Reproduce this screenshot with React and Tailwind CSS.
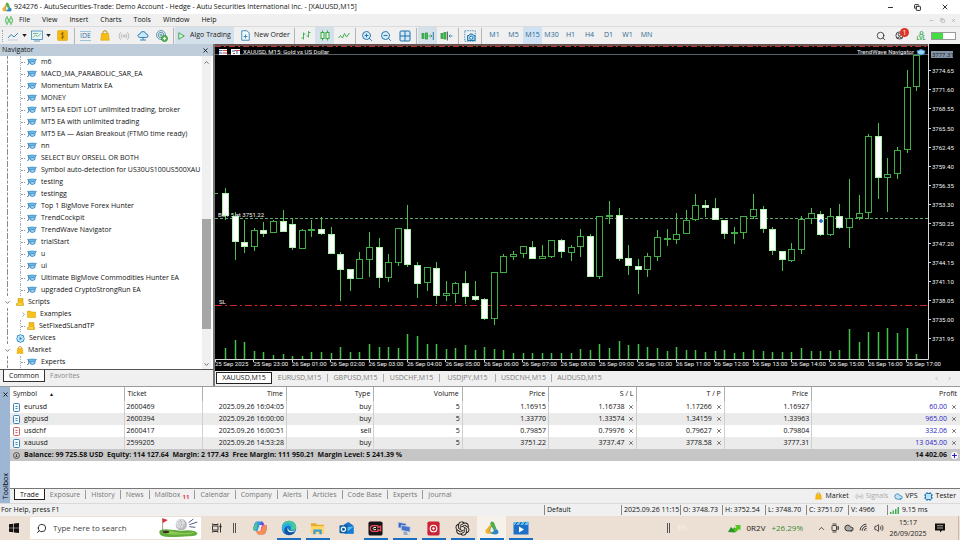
import { useState } from 'react';
import { ChevronDown, ChevronRight, ChevronUp, Cloud, Copy, Minus, Plus, Radio, Search, Volume2, Wifi, X, ZoomIn, ZoomOut } from 'lucide-react';
import { RiOpenaiFill } from 'react-icons/ri';

const menus = ['File', 'View', 'Insert', 'Charts', 'Tools', 'Window', 'Help'];
const timeframes = ['M1', 'M5', 'M15', 'M30', 'H1', 'H4', 'D1', 'W1', 'MN'];
const experts = [
  'm6', 'MACD_MA_PARABOLIC_SAR_EA', 'Momentum Matrix EA', 'MONEY', 'MT5 EA EDIT LOT unlimited trading, broker',
  'MT5 EA with unlimited trading', 'MT5 EA — Asian Breakout (FTMO time ready)', 'nn', 'SELECT BUY ORSELL OR BOTH',
  'Symbol auto-detection for US30US100US500XAU', 'testing', 'testingg', 'Top 1 BigMove Forex Hunter', 'TrendCockpit',
  'TrendWave Navigator', 'trialStart', 'u', 'ui', 'Ultimate BigMove Commodities Hunter EA', 'upgraded CryptoStrongRun EA'
];
const chartTabs = ['XAUUSD,M15', 'EURUSD,M15', 'GBPUSD,M15', 'USDCHF,M15', 'USDJPY,M15', 'USDCNH,M15', 'AUDUSD,M15'];
const toolTabs = ['Trade', 'Exposure', 'History', 'News', 'Mailbox', 'Calendar', 'Company', 'Alerts', 'Articles', 'Code Base', 'Experts', 'Journal'];
const trades = [
  ['eurusd', '2600469', '2025.09.26 16:04:05', 'buy', '5', '1.16915', '1.16738', '1.17266', '1.16927', '60.00'],
  ['gbpusd', '2600394', '2025.09.26 16:00:00', 'buy', '5', '1.33770', '1.33574', '1.34159', '1.33963', '965.00'],
  ['usdchf', '2600417', '2025.09.26 16:00:51', 'sell', '5', '0.79857', '0.79976', '0.79627', '0.79804', '332.06'],
  ['xauusd', '2599205', '2025.09.26 14:53:28', 'buy', '5', '3751.22', '3737.47', '3778.58', '3777.31', '13 045.00']
];
const prices = ['3774.65', '3771.60', '3768.55', '3765.50', '3762.45', '3759.40', '3756.35', '3753.30', '3750.25', '3747.20', '3744.15', '3741.10', '3738.05', '3735.00', '3731.95'];
const times = ['25 Sep 2025', '25 Sep 23:00', ...Array.from({ length: 17 }, (_, i) => `26 Sep ${String(i + 1).padStart(2, '0')}:00`)];

// high, body top, body bottom, low, bearish, volume
const candles = [
  [142, 147, 170, 174, 1, 11], [166, 170, 196, 214, 1, 19], [174, 196, 201, 207, 1, 17], [182, 184, 201, 205, 0, 8],
  [176, 184, 188, 191, 1, 7], [174, 175, 187, 187, 0, 4], [164, 175, 186, 186, 1, 5], [172, 178, 202, 204, 1, 3],
  [183, 184, 203, 203, 0, 3], [174, 183, 184, 191, 0, 7], [171, 183, 188, 189, 1, 7], [181, 188, 208, 208, 1, 6],
  [206, 208, 224, 255, 1, 12], [223, 223, 233, 245, 1, 7], [206, 213, 233, 233, 0, 7], [186, 201, 214, 231, 0, 15],
  [192, 201, 232, 242, 1, 12], [208, 216, 232, 236, 0, 12], [182, 182, 217, 220, 0, 11], [159, 183, 219, 221, 1, 25],
  [216, 219, 238, 252, 1, 23], [221, 221, 237, 245, 0, 15], [216, 222, 250, 258, 1, 15], [235, 247, 250, 255, 0, 10],
  [236, 237, 248, 257, 0, 11], [225, 237, 251, 258, 1, 14], [235, 250, 254, 255, 1, 9], [252, 253, 273, 274, 1, 12],
  [226, 226, 273, 279, 0, 10], [208, 210, 227, 227, 0, 9], [205, 208, 211, 214, 0, 6], [200, 200, 208, 212, 0, 6],
  [195, 201, 213, 213, 1, 6], [199, 210, 213, 213, 0, 6], [194, 194, 211, 212, 0, 6], [193, 194, 206, 212, 1, 6],
  [199, 201, 207, 215, 0, 6], [183, 190, 201, 211, 0, 10], [188, 190, 231, 231, 1, 9], [170, 170, 231, 233, 0, 15],
  [155, 169, 170, 178, 0, 11], [162, 169, 213, 215, 1, 18], [199, 212, 220, 229, 1, 14], [213, 220, 224, 248, 1, 15],
  [207, 210, 224, 231, 0, 12], [184, 191, 211, 215, 0, 11], [183, 192, 193, 200, 0, 8], [167, 188, 194, 198, 0, 12],
  [164, 174, 188, 188, 0, 9], [148, 159, 174, 175, 0, 9], [154, 159, 162, 171, 1, 7], [152, 162, 174, 174, 1, 8],
  [174, 174, 188, 193, 1, 9], [181, 186, 188, 198, 0, 6], [170, 170, 187, 193, 0, 7], [148, 163, 171, 173, 0, 9],
  [160, 163, 183, 187, 1, 8], [181, 183, 205, 209, 1, 7], [205, 205, 214, 225, 1, 7], [197, 203, 215, 216, 0, 7],
  [170, 173, 204, 208, 0, 11], [162, 167, 173, 178, 0, 8], [165, 168, 189, 190, 1, 8], [162, 170, 189, 190, 0, 8],
  [158, 170, 182, 183, 1, 9], [133, 172, 182, 202, 0, 30], [149, 167, 172, 174, 0, 17], [88, 90, 167, 173, 0, 27],
  [77, 90, 132, 153, 1, 27], [112, 128, 132, 166, 0, 31], [101, 104, 128, 133, 0, 26], [24, 41, 104, 107, 0, 31],
  [9, 9, 41, 45, 0, 5]
];

function HatIcon() {
  return (
    <svg viewBox="0 0 20 16" className="h-2 w-[10px] shrink-0">
      <path d="M6 6 V11 Q10 15 16 11 V5" fill="#a9d8f5" stroke="#2378b5" strokeWidth="1.600" />
      <path d="M1 3 L11 2 L19 3 L15 7 L6 8 Z" fill="#6bb7e6" stroke="#2378b5" strokeWidth="1.200" />
      <path d="M3 5 L4 10 L1 14" stroke="#1c6ba6" strokeWidth="1.800" fill="none" />
    </svg>
  );
}

function ScriptIcon() {
  return (
    <svg viewBox="0 0 16 16" className="size-2 shrink-0">
      <path d="M4 1 H14 V11 H15 V15 H1 V11 H4 Z" fill="#f3bd12" stroke="#c48d00" />
      <path d="M3 12 H12" stroke="#fff0b0" strokeWidth="1.5" />
    </svg>
  );
}

function FolderIcon() {
  return (
    <svg viewBox="0 0 18 16" className="h-2 w-[9px] shrink-0">
      <path d="M1 2 H7 L9 4 H17 V15 H1 Z" fill="#f6c21c" stroke="#d39b00" />
    </svg>
  );
}

function BagIcon({ className }) {
  return (
    <svg viewBox="0 0 20 22" className={className}>
      <path d="M6 9 V5 Q6 1.500 10 1.500 Q14 1.500 14 5 V9" stroke="#b98400" strokeWidth="2" fill="none" />
      <path d="M3 7 H17 L18.500 20.500 H1.500 Z" fill="#f8bb12" stroke="#d79a00" />
    </svg>
  );
}

function GearIcon() {
  return (
    <svg viewBox="0 0 20 20" className="size-[9px] shrink-0">
      <path d="M10 1 L13 3 L17 4 L17 8 L19 10 L17 13 L17 16 L13 17 L10 19 L7 17 L3 16 L3 13 L1 10 L3 8 L3 4 L7 3 Z" fill="#bde3f8" stroke="#2b86bf" strokeWidth="2" />
      <path d="M8 6.500 L13.500 10 L8 13.500 Z" fill="#1d77b4" />
    </svg>
  );
}

function LogoIcon({ className }) {
  return (
    <svg viewBox="0 0 24 24" className={className}>
      <path d="M12 1 Q16 1 17 7 L20 14 H13 L9 6 Q9 1 12 1 Z" fill="#4eae4b" />
      <path d="M9 6 L13 14 L10 22 H4 Q0 21 1 16 Z" fill="#f0b429" />
      <path d="M10 22 L13 14 H20 Q24 16 23 20 Q22 23 18 23 Z" fill="#2a86c8" />
      <path d="M9 12 L12 9 L16 17 L12 20 L8 18 Z" fill="#e9f3ee" stroke="#4a7c66" />
    </svg>
  );
}

function ToolButton({ label, active, children }) {
  return (
    <button aria-label={label} className={`flex h-[17px] w-[19px] items-center justify-center ${active ? 'bg-[#d5e1ea]' : ''}`}>
      {children}
    </button>
  );
}

function Separator() {
  return <div className="flex h-4 w-1 justify-center"><div className="w-px bg-[#b4b4b4]" /></div>;
}

function Caret() {
  return (
    <svg viewBox="0 0 6 4" className="h-[3px] w-[5px]"><path d="M0 0 H6 L3 4 Z" fill="#222" /></svg>
  );
}

function Toolbar() {
  const [frame, setFrame] = useState('M15');
  return (
    <div className="flex h-[18px] items-center border-t border-[#dcdcdc] bg-[#f0f0f0]">
      <div className="ml-[2px] mr-1 h-3 border-l border-dotted border-[#a0a0a0]" />
      <button aria-label="Line studies" className="flex w-[22px] items-center gap-[3px]">
        <svg viewBox="0 0 24 20" className="h-[10px] w-3" fill="none" stroke="#3a85b5" strokeWidth="2">
          <path d="M2 14 L8 7 L14 12 L22 4" /><path d="M2 18 H22" stroke="#b9d3e4" />
        </svg>
        <Caret />
      </button>
      <button aria-label="New chart" className="ml-[2px] flex w-[22px] items-center gap-[3px]">
        <svg viewBox="0 0 24 24" className="size-3" fill="none" stroke="#2f80b4" strokeWidth="1.500">
          <rect x="1" y="2" width="22" height="17" fill="#e8f4fa" /><path d="M4 15 L9 10 L13 13 L20 7" stroke="#53aa5d" /><path d="M4 7 H14" stroke="#53aa5d" /><path d="M6 22 H18" />
        </svg>
        <Caret />
      </button>
      <ToolButton label="Symbols">
        <svg viewBox="0 0 22 22" className="size-[11px]">
          <rect x="1" y="1" width="20" height="20" rx="2" fill="#f5b90f" stroke="#d79b00" />
          <path d="M14.500 7 Q11 4.500 8.500 7 Q7.500 10 11 11 Q15 12 13.500 15 Q11 17.500 7.500 15 M11 3.500 V18.500" stroke="#8a6100" strokeWidth="1.600" fill="none" />
        </svg>
      </ToolButton>
      <Separator />
      <ToolButton label="IDE">
        <span className="border-y border-[#9cc3dc] text-[7px] leading-[8px] text-[#1d6fa5]">IDE</span>
      </ToolButton>
      <ToolButton label="Market"><BagIcon className="h-[11px] w-[10px]" /></ToolButton>
      <ToolButton label="Signals"><Radio size={12} color="#ababab" strokeWidth={1.5} /></ToolButton>
      <ToolButton label="VPS">
        <svg viewBox="0 0 24 22" className="h-[11px] w-3" stroke="#2478b0" strokeWidth="1.800">
          <path d="M5 15 Q1 14 2 10.500 Q3 8 6 8 Q7 3 12 3 Q17 3 18 8 Q22 8 22 12 Q22 15 19 15 Z" fill="#cbe8f8" /><path d="M12 15 V20 M6 20 H18" fill="none" />
        </svg>
      </ToolButton>
      <ToolButton label="Community">
        <svg viewBox="0 0 24 24" className="size-3" fill="none" stroke="#4f8fa8" strokeWidth="1.800">
          <circle cx="10" cy="10" r="9" /><circle cx="10" cy="10" r="5.500" /><circle cx="10" cy="10" r="2" />
          <circle cx="17" cy="17" r="6" fill="#5dbd55" stroke="#2f9138" /><path d="M14 17 H20 M17 14 V20" stroke="#fff" />
        </svg>
      </ToolButton>
      <Separator />
      <button className="flex h-[17px] w-[59px] items-center justify-center gap-[5px] bg-[#d5e1ea] text-[7px] whitespace-nowrap text-[#222]">
        <svg viewBox="0 0 14 16" className="h-2 w-[7px] shrink-0"><path d="M1.500 1.500 L12.500 8 L1.500 14.500 Z" fill="#d8f1da" stroke="#35a446" strokeWidth="1.800" /></svg>
        Algo Trading
      </button>
      <button className="flex h-[17px] w-[58px] items-center gap-1 pl-[7px] text-[7px] whitespace-nowrap text-[#222]">
        <svg viewBox="0 0 18 22" className="h-[11px] w-[9px] shrink-0" fill="none" stroke="#3a83b5" strokeWidth="1.800">
          <path d="M3 1.500 H12 L16.500 6 V20.500 H1.500 V1.500 Z" fill="#eff8fc" /><path d="M5 13 H13 M9 9 V17" />
        </svg>
        New Order
      </button>
      <Separator />
      <ToolButton label="Bar chart">
        <svg viewBox="0 0 24 22" className="h-[11px] w-3" fill="none" stroke="#4bb15a" strokeWidth="2"><path d="M7 5 V19 M3 16 H7 M7 8 H11 M17 2 V15 M13 12 H17 M17 5 H21" /></svg>
      </ToolButton>
      <ToolButton label="Candlesticks" active>
        <svg viewBox="0 0 24 22" className="h-[11px] w-3" fill="#e1f5e2" stroke="#3eac4d" strokeWidth="2"><path d="M7 1 V21 M17 1 V21" /><rect x="4" y="5" width="6" height="12" /><rect x="14" y="5" width="6" height="12" /></svg>
      </ToolButton>
      <ToolButton label="Line chart">
        <svg viewBox="0 0 24 18" className="h-[9px] w-3" fill="none" stroke="#43ae52" strokeWidth="2"><path d="M1 14 L5 9 L9 14 L13 5 L17 12 L23 4" /></svg>
      </ToolButton>
      <Separator />
      <ToolButton label="Zoom in"><ZoomIn size={12} color="#2879b0" fill="#d4eaf7" strokeWidth={2} /></ToolButton>
      <ToolButton label="Zoom out"><ZoomOut size={12} color="#2879b0" fill="#d4eaf7" strokeWidth={2} /></ToolButton>
      <ToolButton label="Tile windows">
        <svg viewBox="0 0 24 24" className="size-3" fill="#d4eaf7" stroke="#1d6fa8" strokeWidth="2"><rect x="2" y="2" width="20" height="20" rx="2" /><path d="M12 2 V22 M2 12 H22" /></svg>
      </ToolButton>
      <Separator />
      <ToolButton label="Auto scroll" active>
        <svg viewBox="0 0 26 20" className="h-[10px] w-[13px]" fill="#45b754" stroke="#2f9e40" strokeWidth="1.600"><rect x="2" y="5" width="4" height="10" /><rect x="9" y="4" width="4" height="12" /><path d="M15 10 H22 M19 7 L22 10 L19 13" fill="none" /><path d="M24.500 2 V18" stroke="#2879b0" strokeWidth="2" /></svg>
      </ToolButton>
      <ToolButton label="Chart shift">
        <svg viewBox="0 0 26 20" className="h-[10px] w-[13px]" fill="#45b754" stroke="#2f9e40" strokeWidth="1.600"><rect x="2" y="5" width="4" height="10" /><rect x="8" y="3" width="4" height="13" /><path d="M15 1 V19" stroke="#444" /><path d="M25 10 H18 M21 7 L18 10 L21 13" fill="none" stroke="#2879b0" /></svg>
      </ToolButton>
      <Separator />
      <ToolButton label="Screenshot">
        <svg viewBox="0 0 24 24" className="size-3" fill="none" stroke="#2879b0" strokeWidth="2"><rect x="1.500" y="1.500" width="21" height="21" strokeDasharray="3 2" strokeWidth="1.600" /><path d="M7 11 H10 L12 8 H17 L19 11 H22 V21 H7 Z" fill="#9bd0ee" /><circle cx="14.500" cy="15.500" r="3" fill="#fff" /></svg>
      </ToolButton>
      <Separator />
      <div className="ml-[2px] flex">
        {timeframes.map(name => (
          <button
            key={name}
            onClick={() => setFrame(name)}
            className={`h-[17px] w-[19px] text-center text-[7px] text-[#2a6690] ${frame === name ? 'bg-[#cfe2f3]' : ''}`}
          >
            {name}
          </button>
        ))}
      </div>
      <div className="ml-auto flex items-center pr-1">
        <ToolButton label="Search"><Search size={10} color="#333" strokeWidth={2} /></ToolButton>
        <button aria-label="Notifications" className="relative mr-[2px] flex h-[17px] w-[19px] items-center justify-center">
          <svg viewBox="0 0 20 20" className="size-[9px]" fill="none" stroke="#333" strokeWidth="2"><circle cx="10" cy="10" r="8" /><circle cx="10" cy="8" r="3" /><path d="M4 16 Q10 10 16 16" /></svg>
          <span className="absolute right-0 top-px size-[9px] rounded-full bg-[#dc3426] text-center text-[7px] leading-[9px] text-white">1</span>
        </button>
        <div className="flex w-5 flex-col items-center text-[#35a953]">
          <svg viewBox="0 0 14 10" className="h-[5px] w-[7px]" fill="none" stroke="#35a953" strokeWidth="1.800"><circle cx="7" cy="4" r="3" /><path d="M1 9 Q7 5 13 9" /></svg>
          <span className="text-[5px] leading-[5px] font-bold">LVL</span>
        </div>
        <div className="flex h-2 w-[25px] border border-[#9a9a9a] bg-white"><div className="w-[11px] bg-[#43dc43]" /></div>
      </div>
    </div>
  );
}

function TreeRow({ label, icon, nested, arrow }) {
  return (
    <li className="flex h-3 items-center">
      <span className="flex h-full w-[14px] shrink-0 items-center justify-center">
        {!nested && arrow ? arrow : <span className="ml-px h-full border-l border-dashed border-[#8a8a8a]" />}
      </span>
      {nested && (
        <span className="flex h-full w-[13px] shrink-0 items-center border-l border-transparent pl-[5px]">
          {arrow || <><span className="h-full border-l border-dotted border-[#9db0c0]" /><span className="w-1 border-t border-dotted border-[#9a9a9a]" /></>}
        </span>
      )}
      <span className={`flex items-center gap-1 whitespace-nowrap ${nested ? '' : 'ml-[2px]'}`}>{icon}{label}</span>
    </li>
  );
}

function Navigator() {
  const [tab, setTab] = useState('Common');
  const down = <ChevronDown size={7} color="#444" strokeWidth={2.5} />;
  return (
    <aside className="flex w-[213px] shrink-0 flex-col bg-[#f0f0f0] text-[7px] text-[#111]">
      <div className="flex h-3 items-center justify-between bg-[#bfcddb] pl-[2px] pr-1">
        Navigator
        <button aria-label="Close navigator"><X size={7} color="#111" strokeWidth={3} /></button>
      </div>
      <div className="flex border-b border-[#555] bg-white">
        <ul className="min-w-0 flex-1 overflow-hidden pb-px">
          {experts.map(name => <TreeRow key={name} label={name} icon={<HatIcon />} nested />)}
          <TreeRow label="Scripts" icon={<ScriptIcon />} arrow={down} />
          <TreeRow label="Examples" icon={<FolderIcon />} nested arrow={<ChevronRight size={7} color="#666" strokeWidth={2} />} />
          <TreeRow label="SetFixedSLandTP" icon={<ScriptIcon />} nested />
          <TreeRow label="Services" icon={<GearIcon />} />
          <TreeRow label="Market" icon={<BagIcon className="size-2 shrink-0" />} arrow={down} />
          <TreeRow label="Experts" icon={<HatIcon />} nested />
        </ul>
        <div className="mr-[2px] flex w-[9px] flex-col items-center bg-[#f0f0f0]">
          <ChevronUp size={7} color="#444" strokeWidth={2.5} className="mt-[3px]" />
          <div className="mt-[153px] h-[110px] w-full bg-[#a6a6a6]" />
          <ChevronDown size={7} color="#444" strokeWidth={2.5} className="mb-px mt-auto" />
        </div>
      </div>
      <div className="flex pl-[3px]">
        {['Common', 'Favorites'].map(name => (
          <button
            key={name}
            onClick={() => setTab(name)}
            className={`h-3 px-[5px] leading-[10px] ${tab === name ? 'border-x border-b border-[#333] bg-white' : 'text-[#888]'}`}
          >
            {name}
          </button>
        ))}
      </div>
    </aside>
  );
}

function Chart() {
  return (
    <svg viewBox="0 0 745 327" className="block w-full bg-black font-[Roboto,sans-serif]" fontSize="6" fill="#f2f2f2">
      <path d="M0 1 H713" stroke="#6a4f50" strokeWidth="2" />
      <path d="M0 2.500 H713" stroke="#c0392f" strokeWidth="1" strokeDasharray="6 3 2 3" />
      <path d="M0 10.500 H713" stroke="#5a6068" strokeWidth="1" />
      <path d="M0 174.500 H713" stroke="#62a870" strokeWidth="1" strokeDasharray="3 2" />
      <path d="M0 261.500 H713" stroke="#d42626" strokeWidth="1" strokeDasharray="7 3 2 3" />
      <path d="M0 149.500 H3" stroke="#46b84a" />
      <g transform="translate(10 2)" stroke="#4cbf50">
        {candles.map(([high, top, bottom, low, bearish, volume], i) => {
          const x = Math.round(i * 9.6) + 0.5;
          return (
            <g key={i}>
              <path d={`M${x} ${high} V${low}`} />
              <rect x={x - 3} y={top + 0.5} width="6" height={Math.max(bottom - top - 1, 1)} fill={bearish ? '#fff' : '#000'} stroke={bearish ? '#a9f0a9' : '#3fae45'} />
              <path d={`M${x} ${313 - volume} V313`} stroke="#48c04c" strokeWidth="1.5" />
            </g>
          );
        })}
      </g>
      <path d="M606 175 V179 M604 177 H608" stroke="#1f5fd0" strokeWidth="1.500" />
      <path d="M0 315.500 H713.500 V0" fill="none" stroke="#d8d8d8" />
      {times.map((label, i) => (
        <g key={label}>
          <text x={i * 38.4} y="322">{label}</text>
          <path d={`M${Math.round(i * 38.4) + 0.5} 315 V318`} stroke="#d8d8d8" />
        </g>
      ))}
      {prices.map((label, i) => (
        <g key={label}>
          <text x="717" y={29 + i * 19.17}>{label}</text>
          <path d={`M713 ${Math.round(27 + i * 19.17) - 0.5} H716`} stroke="#d8d8d8" />
        </g>
      ))}
      <rect x="716" y="7" width="22" height="7" fill="#8494a6" />
      <text x="717" y="13" fill="#18222c">3777.31</text>
      <g>
        <rect x="4" y="5" width="8" height="6" fill="#fff" />
        <path d="M4 6.500 H7 M4 9 H7" stroke="#2b62b5" /><path d="M7.500 6.500 H12 M7.500 9 H12" stroke="#c8453c" />
        <rect x="16" y="5" width="9" height="6" fill="#fff" />
        <path d="M17 7 H20 M22 6 V10" stroke="#2b62b5" /><path d="M20 6.500 H25 M18 9.500 H20" stroke="#c8453c" />
      </g>
      <text x="28" y="10">XAUUSD, M15:  Gold vs US Dollar</text>
      <text x="699" y="10" textAnchor="end">TrendWave Navigator</text>
      <path d="M702 7 L706 5.500 L710 7 L709 10 Q706 12 703 10 Z" fill="#9dd3f3" stroke="#3b8fc9" />
      <text x="3" y="173">BUY 5 at 3751.22</text>
      <text x="4" y="260">SL</text>
    </svg>
  );
}

function ChartPanel() {
  const [tab, setTab] = useState(chartTabs[0]);
  return (
    <section className="flex min-w-0 flex-1 flex-col border-l-2 border-[#777] bg-[#f0f0f0]">
      <Chart />
      <div className="flex items-center pl-px pt-px text-[7px] text-[#7c7c7c]">
        {chartTabs.map(name => (
          <button
            key={name}
            onClick={() => setTab(name)}
            className={`flex w-[56px] items-center justify-center ${tab === name ? 'h-3 border border-[#222] bg-white text-[#111]' : 'h-2 border-r border-[#aaa] last-of-type:border-transparent'}`}
          >
            {name}
          </button>
        ))}
        <span className="ml-auto mr-2 flex gap-2"><ChevronRight size={5} className="rotate-180" /><ChevronRight size={5} /></span>
      </div>
    </section>
  );
}

function TradeTable() {
  const cell = 'border-r border-[#d0d0d0] px-[2px]';
  return (
    <table className="w-full table-fixed border-collapse text-right text-[7px] leading-3 text-[#111]">
      <colgroup>
        <col className="w-[12%]" /><col className="w-[8.300%]" /><col className="w-[8.800%]" /><col className="w-[9.200%]" /><col className="w-[9.300%]" />
        <col className="w-[9.100%]" /><col className="w-[9.300%]" /><col className="w-[9.200%]" /><col className="w-[9.200%]" /><col />
      </colgroup>
      <thead>
        <tr className="h-[14px]">
          {['Symbol', 'Ticket', 'Time', 'Type', 'Volume', 'Price', 'S / L', 'T / P', 'Price', 'Profit'].map((name, i) => (
            <th key={i} className={`px-[3px] font-normal ${i < 2 ? 'text-left' : ''} ${i < 9 ? 'border-r border-[#b0b0b0]' : ''}`}>
              {name}
              {i === 0 && <span className="ml-3 text-[5px]">▲</span>}
            </th>
          ))}
        </tr>
      </thead>
      <tbody>
        {trades.map(row => (
          <tr key={row[0]} className="h-3 even:bg-[#ebebeb]">
            <td className={`${cell} text-left`}>
              <span className="flex items-center gap-1 pl-px">
                <svg viewBox="0 0 14 18" className="h-[9px] w-[7px]" fill="#f4fafd" stroke={row[3] === 'sell' ? '#d0605a' : '#3b7fb3'} strokeWidth="2">
                  <rect x="1" y="1" width="12" height="16" rx="2" /><path d="M5 7 H9 M5 11 H9" />
                </svg>
                {row[0]}
              </span>
            </td>
            <td className={`${cell} text-left`}>{row[1]}</td>
            {row.slice(2, 6).map((value, i) => <td key={i} className={cell}>{value}</td>)}
            {row.slice(6, 8).map((value, i) => (
              <td key={i} className={cell}><span className="flex items-center justify-end gap-1">{value}<X size={6} color="#777" strokeWidth={4} /></span></td>
            ))}
            <td className={cell}>{row[8]}</td>
            <td className="pr-[3px] text-[#2a22c8]"><span className="flex items-center justify-end gap-1">{row[9]}<X size={6} color="#777" strokeWidth={4} /></span></td>
          </tr>
        ))}
      </tbody>
      <tfoot>
        <tr className="h-3 bg-[#c6c6c6] font-bold">
          <td colSpan={9} className="pl-[3px] text-left">
            <span className="flex items-center gap-1 whitespace-pre">
              <svg viewBox="0 0 14 14" className="size-[7px]" fill="none" stroke="#333" strokeWidth="1.500"><circle cx="7" cy="7" r="6" /><path d="M7 4 V10 M4.500 7.500 L7 10 L9.500 7.500" /></svg>
              {'Balance: 99 725.58 USD  Equity: 114 127.64  Margin: 2 177.43  Free Margin: 111 950.21  Margin Level: 5 241.39 %'}
            </span>
          </td>
          <td className="pr-[2px]">
            <span className="flex items-center justify-end gap-1">14 402.06<span className="rounded-full bg-white"><Plus size={7} color="#2a22c8" strokeWidth={4} /></span></span>
          </td>
        </tr>
      </tfoot>
    </table>
  );
}

function Toolbox() {
  const [tab, setTab] = useState('Trade');
  return (
    <section className="flex h-[117px] border-t border-[#9a9a9a] bg-[#f0f0f0]">
      <div className="flex w-[10px] shrink-0 flex-col items-center justify-between bg-[#9db6d3] py-1 text-[7px]">
        <button aria-label="Close toolbox"><X size={7} color="#111" strokeWidth={3} /></button>
        <span className="rotate-180 leading-[9px] [writing-mode:vertical-rl]">Toolbox</span>
      </div>
      <div className="flex min-w-0 flex-1 flex-col">
        <div className="flex-1 bg-white"><TradeTable /></div>
        <div className="flex h-[15px] items-start border-t border-[#777] pl-1 text-[7px] text-[#777]">
          {toolTabs.map(name => (
            <button
              key={name}
              onClick={() => setTab(name)}
              className={`leading-[9px] ${tab === name ? 'h-[11px] border-x border-b border-[#222] bg-white px-[5px] text-[#111]' : 'mt-px h-[9px] border-r border-[#999] px-[5px] last-of-type:border-transparent'}`}
            >
              {name}
              {name === 'Mailbox' && <sub className="ml-[2px] text-[6px] font-bold text-[#e0403a]">11</sub>}
            </button>
          ))}
          <div className="ml-auto flex h-full items-center gap-[6px] pr-1 text-[#111]">
            <button className="flex items-center gap-[3px]"><BagIcon className="h-2 w-[7px]" />Market</button>
            <button className="flex items-center gap-[2px] text-[#aaa]"><Radio size={9} strokeWidth={1.5} />Signals</button>
            <button className="flex items-center gap-[2px]"><Cloud size={9} color="#2378b5" fill="#bfe2f6" />VPS</button>
            <button className="flex items-center gap-[3px]">
              <svg viewBox="0 0 18 18" className="size-[9px]" stroke="#2378b5" strokeWidth="2" fill="#bfe2f6"><rect x="3" y="3" width="12" height="12" rx="2" /><path d="M6 0 V3 M12 0 V3 M6 15 V18 M12 15 V18 M0 6 H3 M0 12 H3 M15 6 H18 M15 12 H18" /></svg>
              Tester
            </button>
          </div>
        </div>
      </div>
    </section>
  );
}

function StatusBar() {
  const cell = 'border-l border-[#888] pl-[2px] leading-[10px]';
  return (
    <footer className="flex h-[13px] items-center border-t border-[#dadada] bg-[#f0f0f0] text-[7px] whitespace-nowrap text-[#111]">
      <span className="pl-px">For Help, press F1</span>
      <span className={`${cell} ml-auto w-[77px]`}>Default</span>
      <span className={`${cell} w-[59px]`}>2025.09.26 11:15</span>
      <span className={`${cell} w-[42px]`}>O: 3748.73</span>
      <span className={`${cell} w-[43px]`}>H: 3752.54</span>
      <span className={`${cell} w-[41px]`}>L: 3748.70</span>
      <span className={`${cell} w-[42px]`}>C: 3751.07</span>
      <span className={`${cell} w-[39px]`}>V: 4966</span>
      <span className={`${cell} flex w-[73px] items-center gap-[3px]`}>
        <svg viewBox="0 0 18 14" className="h-[7px] w-[9px]" fill="#3cae52"><path d="M0 10 H3 V14 H0 Z M5 7 H8 V14 H5 Z M10 4 H13 V14 H10 Z M15 0 H18 V14 H15 Z" /></svg>
        9.15 ms
      </span>
    </footer>
  );
}

function GolfArt() {
  return (
    <svg viewBox="0 0 120 60" className="mr-[3px] h-5 w-10 shrink-0">
      <path d="M4 44 Q2 34 24 34 Q50 36 70 38 Q112 34 118 46 Q118 56 90 55 Q60 58 40 57 Q6 58 4 44 Z" fill="#62ac3c" />
      <path d="M10 42 Q30 34 50 42 Q80 48 110 42 Q104 50 76 49 Q30 52 10 42 Z" fill="#8bcb54" />
      <ellipse cx="24" cy="42" rx="10" ry="3.500" fill="#3b2c22" />
      <path d="M14 42 V2" stroke="#7a6a60" strokeWidth="2" />
      <path d="M13 1 L30 6 L14 15 Z" fill="#d9313a" />
      <circle cx="70" cy="20" r="17" fill="#b9bbc2" />
      <circle cx="67" cy="17" r="13" fill="#dcdde1" />
      <path d="M62 12 H64 M70 12 H72 M62 20 H64 M70 20 H72 M66 26 H68 M76 22 H78 M66 8 H68" stroke="#8a8c96" strokeWidth="3" />
      <path d="M92 14 L106 3 M94 20 L118 12 M94 26 L112 28" stroke="#525a86" strokeWidth="3" />
    </svg>
  );
}

const apps = [
  { name: 'Copilot', icon: <svg viewBox="0 0 32 32" className="size-4"><path d="M9 3 H20 L24 10 H15 L11 22 H5 Q1 20 3 13 Q5 4 9 3 Z" fill="#2c9be8" /><path d="M3 15 L9 3 Q12 8 10 16 Q8 22 5 22 Q2 20 3 15 Z" fill="#58c08f" /><path d="M20 3 Q24 4 25 10 H29 Q31 14 29 21 Q27 29 22 29 H12 L17 21 Z" fill="#d65bb0" /><path d="M11 22 H18 L22 12 L28 10 Q31 14 28 22 Q26 29 21 29 H12 Q9 28 8 22 Z" fill="#f29150" /><path d="M18 3 Q22 3 24 10 H16 Z" fill="#5b57d8" /><path d="M13 21 L17 10 H20 L16 21 Z" fill="#f8e8ea" /></svg> },
  { name: 'Edge', open: true, icon: <svg viewBox="0 0 32 32" className="size-4"><circle cx="16" cy="16" r="14.500" fill="#1577c9" /><path d="M2 14 Q5 1 17 1.500 Q29 2 30.500 14 Q30 21 22 21 Q18 20 20 17 Q20 10 12 10 Q5 10 2 14 Z" fill="#47c99a" /><path d="M2 14 Q5 5 16 6 Q24 8 22 15 Q18 9 11 12 Q5 15 7 24 Q1 20 2 14 Z" fill="#2bb1dd" /><path d="M12 15 Q10 24 22 25 L28 23 Q23 31 14 30 Q5 26 8 17 Q9 14 12 15 Z" fill="#12549e" /><path d="M14 16 Q14 21 20 22 Q25 23 29 20 Q27 24 21 24.500 Q12 24 13 17 Z" fill="#e9f6fb" /></svg> },
  { name: 'File Explorer', open: true, icon: <svg viewBox="0 0 32 32" className="size-[15px]"><path d="M2 5 H12 L15 8 H30 V26 H2 Z" fill="#e7ab2f" /><path d="M2 11 H30 V27 H2 Z" fill="#ffd766" /><path d="M7 28 V18 H25 V28 H20 V23 H12 V28 Z" fill="#3f9bd8" /></svg> },
  { name: 'Outlook', icon: <svg viewBox="0 0 32 32" className="size-[15px]"><path d="M10 8 L20 2 L31 10 V26 H10 Z" fill="#1c72c4" /><path d="M12 14 L31 11 V27 H12 Z" fill="#4cbcf1" /><path d="M12 27 L31 12 V27 Z" fill="#187ad0" /><rect x="1" y="9" width="17" height="17" rx="2" fill="#0f5ea8" /><circle cx="9.500" cy="17.500" r="4.500" fill="none" stroke="#fff" strokeWidth="2.500" /></svg> },
  { name: 'Screen recorder', open: true, icon: <svg viewBox="0 0 32 32" className="size-[15px]"><rect x="1" y="1" width="30" height="30" rx="4" fill="#1b1416" /><path d="M21 10 H11 Q5 10 5 16 Q5 22 11 22 H21 V18 L27 21 V11 L21 14 Z" fill="none" stroke="#e7505a" strokeWidth="2.500" /><path d="M17 14 Q11 12 11 16.500 Q12 20 17 18" fill="none" stroke="#fff" strokeWidth="2" /></svg> },
  { name: 'Remote Desktop', open: true, icon: <svg viewBox="0 0 32 32" className="size-[15px]"><path d="M3 3 L19 6 V17 L3 14 Z" fill="#3261b8" stroke="#a9bce4" strokeWidth="1.500" /><path d="M9 9 L28 12 V24 L9 20 Z" fill="#4674c6" stroke="#cdd8ee" strokeWidth="2" /><path d="M14 22 L22 24 V28 L26 30 H14 Z" fill="#9aa8c6" /></svg> },
  { name: 'Recorder', open: true, icon: <svg viewBox="0 0 32 32" className="size-[15px]"><rect x="3" y="1" width="26" height="30" rx="4" fill="#c92334" /><circle cx="16" cy="16" r="7" fill="none" stroke="#fff" strokeWidth="2.500" /><circle cx="16" cy="16" r="2.500" fill="#fff" /></svg> },
  { name: 'ChatGPT', open: true, icon: <RiOpenaiFill size={17} color="#191919" /> },
  { name: 'Trading terminal', open: true, current: true, icon: <LogoIcon className="size-[14px]" /> },
  { name: 'Movies', open: true, icon: <svg viewBox="0 0 32 32" className="size-4"><path d="M1 5 H31 V29 H1 Z" fill="#1b6fc8" /><path d="M1 5 L31 3 V10 H1 Z" fill="#66bdf0" /><path d="M5 10 L9 4 M13 10 L17 4 M21 10 L25 4" stroke="#0f4f96" strokeWidth="2" /><path d="M12 13 L22 19 L12 25 Z" fill="#fff" /></svg> }
];

function Taskbar() {
  return (
    <nav className="flex h-6 items-center bg-[#ecdfd3] text-[#222]">
      <button aria-label="Start" className="flex w-[30px] justify-center pr-[2px]">
        <svg viewBox="0 0 22 22" className="size-[10px]" fill="#111"><path d="M0 3 L9.500 1.500 V10.500 H0 Z M11 1.300 L22 0 V10.500 H11 Z M0 11.500 H9.500 V20.500 L0 19 Z M11 11.500 H22 V22 L11 20.700 Z" /></svg>
      </button>
      <label className="flex h-[22px] w-[171px] items-center bg-white pl-[6px]">
        <Search size={11} color="#222" strokeWidth={2} className="-scale-x-100" />
        <input aria-label="Search" placeholder="Type here to search" className="ml-[6px] min-w-0 flex-1 text-[8px] outline-none placeholder:text-[#444]" />
        <GolfArt />
      </label>
      <button aria-label="Task view" className="flex w-[30px] justify-center">
        <svg viewBox="0 0 22 20" className="h-[10px] w-[11px]" fill="none" stroke="#222" strokeWidth="1.800"><rect x="3" y="6" width="11" height="8" /><path d="M3 1 V3 H14 V1 M3 19 V17 H14 V19 M19 1 V19" /><path d="M17 7 H21" strokeWidth="3" /></svg>
      </button>
      <span className="ml-[2px] mr-[9px] h-[10px] w-[3px] border-x border-[#555]" />
      {apps.map(app => (
        <button
          key={app.name}
          aria-label={app.name}
          className={`flex h-6 w-[29px] items-center justify-center ${app.current ? 'bg-[#f7f1eb]' : ''}`}
        >
          <span className={`flex h-full w-6 items-center justify-center ${app.open ? 'border-b-2 border-[#1a6fc0] pt-[2px]' : ''}`}>{app.icon}</span>
        </button>
      ))}
      <div className="ml-auto flex items-center text-[7px]">
        <span className="h-[10px] w-[3px] border-x border-[#555]" />
        <span className="ml-2 w-[50px] text-[#f8f2ec]">EN</span>
        <svg viewBox="0 0 26 18" className="h-[9px] w-[13px]"><path d="M0 16 L6 6 L10 10 L14 6 V17 Z" fill="#27922f" /><path d="M11 12 L17 6 L14 2 H25 V13 L22 10 L15 17 Z" fill="#54c51d" /></svg>
        <span className="ml-[6px] text-[8px]">0R2V</span>
        <span className="ml-[6px] text-[8px] text-[#3b8a35]">+26.29%</span>
        <div className="ml-[14px] flex items-center gap-[5px]">
          <ChevronUp size={9} strokeWidth={2} />
          <svg viewBox="0 0 16 20" className="h-[10px] w-2" fill="none" stroke="#222" strokeWidth="1.600"><path d="M3 2 H11 M3 18 H11" /><rect x="2" y="5" width="9" height="10" rx="1" /><path d="M11 9 L15 7 V13 L11 11" /></svg>
          <Cloud size={10} fill="#aaa" strokeWidth={2} />
          <Wifi size={10} strokeWidth={2} className="-rotate-45" />
          <Volume2 size={10} strokeWidth={2} />
        </div>
        <div className="ml-[5px] w-[38px] text-center leading-[11px]">15:17<br />26/09/2025</div>
        <button aria-label="Action center" className="ml-2 mr-[13px]">
          <svg viewBox="0 0 20 20" className="size-[10px]"><path d="M0 1 H20 V15 H14 L10 19 V15 H0 Z" fill="#111" /><path d="M4 5.500 H16 M4 10 H16" stroke="#ecdfd3" strokeWidth="1.500" /></svg>
        </button>
        <span className="mr-[1px] h-6 border-l border-[#c7b9ad]" />
      </div>
    </nav>
  );
}

export default function App() {
  return (
    <div className="flex min-h-screen flex-col bg-[#f0f0f0] font-['Open_Sans','Noto_Sans',sans-serif]">
      <header className="flex h-[14px] items-center bg-white text-[7px] text-[#111]">
        <LogoIcon className="ml-[2px] mr-[2px] size-[10px]" />
        <h1>924276 - AutuSecurities-Trade: Demo Account - Hedge - Autu Securities International Inc. - [XAUUSD,M15]</h1>
        <div className="ml-auto mr-[11px] flex items-center gap-5">
          <button aria-label="Minimize"><Minus size={7} strokeWidth={3} /></button>
          <button aria-label="Restore"><Copy size={7} strokeWidth={3} className="-scale-y-100 rotate-90" /></button>
          <button aria-label="Close"><X size={8} strokeWidth={2.5} /></button>
        </div>
      </header>
      <div className="flex h-3 items-center gap-3 pl-[5px] text-[7px] text-[#111]">
        <svg viewBox="0 0 16 18" className="-mr-[6px] h-[9px] w-2" fill="#dff5df" stroke="#3fae4d" strokeWidth="1.800"><path d="M4 0 V18 M12 0 V18" /><rect x="1.500" y="4" width="5" height="10" rx="2" /><rect x="9.500" y="4" width="5" height="10" rx="2" /></svg>
        {menus.map(name => <button key={name}>{name}</button>)}
        <div className="ml-auto mr-1 flex items-center gap-[6px] text-[#aaa]">
          <Minus size={5} strokeWidth={3} /><Copy size={5} strokeWidth={3} /><X size={5} strokeWidth={3} />
        </div>
      </div>
      <Toolbar />
      <main className="flex h-[342px]">
        <Navigator />
        <ChartPanel />
      </main>
      <Toolbox />
      <StatusBar />
      <Taskbar />
    </div>
  );
}
